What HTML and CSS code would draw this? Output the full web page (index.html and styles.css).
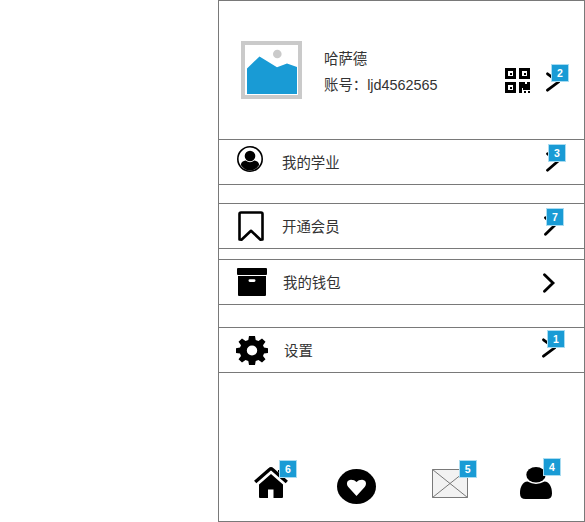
FILE: index.html
```html
<!DOCTYPE html>
<html lang="zh-CN">
<head>
<meta charset="utf-8">
<title>我的</title>
<link rel="stylesheet" href="styles.css">
</head>
<body>
<main class="phone">
  <header class="profile">
    <svg class="avatar" viewBox="0 0 61 58">
      <rect x="2" y="2" width="57" height="54" fill="#fff" stroke="#cacaca" stroke-width="4"/>
      <circle cx="36.3" cy="13" r="4.3" fill="#cacaca"/>
      <path d="M6 27.500 18.500 15.500 36 26.300 46 22.500 56 26V53H6z" fill="#199bd5"/>
    </svg>
    <div class="info">
      <div>哈萨德</div>
      <div>账号：ljd4562565</div>
    </div>
    <svg class="qr" viewBox="0 0 25 25" shape-rendering="crispEdges">
      <path fill-rule="evenodd" d="M0 0h11v11H0zM3 3v5h5V3zM14 0h11v11H14zM17 3v5h5V3zM0 14h11v11H0zM3 17v5h5v-5z"/>
      <path d="M5 5h2v2H5zM19 5h2v2h-2zM5 19h2v2H5zM14 14h6v2h2v-2h3v8h-7v-2h-1v5h-3zM19 23h2v2h-2zM23 23h2v2h-2z"/>
    </svg>
    <div class="go">
      <svg class="chevron" viewBox="0 0 14 20"><path d="M1.500 1.800 12.300 10 1.500 18.200"/></svg>
      <span class="badge">2</span>
    </div>
  </header>

  <section class="row study">
    <svg class="icon" viewBox="0 0 26 26">
      <circle cx="13" cy="13" r="12.200" fill="none" stroke="#000" stroke-width="1.600"/>
      <circle cx="13" cy="10" r="5.300"/>
      <path d="M3.800 19C4.200 16 6 14.800 8.700 14.500Q13 18 17.300 14.500C20 14.800 21.800 16 22.200 19Q18.500 24.500 13 24.500T3.800 19z"/>
    </svg>
    <span class="label">我的学业</span>
    <div class="go">
      <svg class="chevron" viewBox="0 0 14 20"><path d="M1.500 1.800 11 10 1.500 18.200"/></svg>
      <span class="badge">3</span>
    </div>
  </section>

  <section class="row member">
    <svg class="icon" viewBox="0 0 26 31">
      <path d="M3 1.500H23Q24.500 1.500 24.500 3V28.500L22.500 28.800 13 19.800 3.500 28.800 1.500 28.500V3Q1.500 1.500 3 1.500z" fill="none" stroke="#000" stroke-width="2.600" stroke-linejoin="round"/>
    </svg>
    <span class="label">开通会员</span>
    <div class="go">
      <svg class="chevron" viewBox="0 0 14 20"><path d="M1.500 1.800 10 10 1.500 18.200"/></svg>
      <span class="badge">7</span>
    </div>
  </section>

  <section class="row wallet">
    <svg class="icon" viewBox="0 0 30 28">
      <rect width="30" height="7" rx="1"/>
      <path fill-rule="evenodd" d="M1 8H29V27Q29 28 28 28H2Q1 28 1 27zM12.800 11.300a1.300 1.300 0 0 0 0 2.600h4.400a1.300 1.300 0 0 0 0-2.600z"/>
    </svg>
    <span class="label">我的钱包</span>
    <div class="go">
      <svg class="chevron" viewBox="0 0 14 20"><path d="M1.500 1.800 10 10 1.500 18.200"/></svg>
    </div>
  </section>

  <section class="row settings">
    <svg class="icon" viewBox="0 0 32 29" preserveAspectRatio="none">
      <path fill-rule="evenodd" d="M13 0H19L19.700 4 22.500 5.100 26 2.500 29.500 5.700 27 9.200 28 11.600 32 12.200V17L28 17.600 27 20 29.500 23.300 26 26.500 22.500 24 19.700 25.100 19 29H13L12.300 25.100 9.500 24 6 26.500 2.500 23.300 5 20 4 17.600 0 17V12.200L4 11.600 5 9.200 2.500 5.700 6 2.500 9.500 5.100 12.300 4zM16 9.500a5.200 5 0 1 0 0 10a5.200 5 0 1 0 0-10z"/>
    </svg>
    <span class="label">设置</span>
    <div class="go">
      <svg class="chevron" viewBox="0 0 14 20"><path d="M1.500 1.800 12.300 10 1.500 18.200"/></svg>
      <span class="badge">1</span>
    </div>
  </section>

  <nav class="tabs">
    <div class="tab home">
      <svg viewBox="0 0 34 31">
        <path d="M24 3H29V12L24 8z"/>
        <path d="M5 17.500 17 7 29 17.500V30Q29 31 28 31H19.500V22.500H14V31H6Q5 31 5 30z"/>
        <path d="M1.800 15.500 15.500 3.300Q17 2 18.500 3.300L32.200 15.500" fill="none" stroke="#fff" stroke-width="4.600"/>
        <path d="M1.200 15 15.500 2.500Q17 1.200 18.500 2.500L32.800 15" fill="none" stroke="#000" stroke-width="3.400"/>
      </svg>
      <span class="badge">6</span>
    </div>
    <div class="tab heart">
      <svg viewBox="0 0 39 35">
        <ellipse cx="19.500" cy="17.500" rx="19.500" ry="17.500"/>
        <path d="M19.500 27 11.300 18C8.500 14.500 10.500 10.800 14 10.800Q17.500 10.800 19.500 13 21.500 10.800 25 10.800C28.500 10.800 30.500 14.500 27.700 18z" fill="#fff"/>
      </svg>
    </div>
    <div class="tab mail">
      <svg viewBox="0 0 36 29">
        <rect x=".5" y=".5" width="35" height="28" fill="#f2f2f2"/>
        <path d="M.5.500H35.500V28.500H.5zL35.500 28.500M35.500.500.5 28.500" fill="none" stroke="#797979"/>
      </svg>
      <span class="badge">5</span>
    </div>
    <div class="tab user">
      <svg viewBox="0 0 32 32">
        <ellipse cx="16" cy="7.800" rx="9.700" ry="7.800"/>
        <path d="M7.500 14.600Q16 19.500 24.500 14.600C29.500 15 32 20 32 26.500Q32 32 26.500 32H5.500Q0 32 0 26.500C0 20 2.500 15 7.500 14.600z"/>
      </svg>
      <span class="badge">4</span>
    </div>
  </nav>
</main>
</body>
</html>
```
FILE: styles.css
```css
* { box-sizing: border-box; }

body {
  margin: 0;
  background: #fff;
  color: #333;
  font: 14.4px/26px "Liberation Sans", "Noto Sans CJK SC", sans-serif;
}

svg { display: block; }

.phone {
  width: 367px;
  height: 522px;
  margin-left: 218px;
  border: 1px solid #797979;
  display: flex;
  flex-direction: column;
}

.profile {
  height: 138px;
  display: flex;
  align-items: flex-start;
  padding: 40px 24px 0 22px;
}

.avatar { width: 61px; height: 58px; }

.info {
  flex: 1;
  margin: 5px 0 0 22px;
  white-space: nowrap;
}

.qr { width: 25px; height: 25px; margin: 27px 16px 0 0; }

.profile .go { margin-top: 31px; }
.profile .badge { top: -8px; }

.go {
  position: relative;
  width: 14px;
  height: 20px;
}

.chevron {
  width: 14px;
  height: 20px;
  fill: none;
  stroke: #000;
  stroke-width: 2.8;
  stroke-linecap: round;
}

.badge {
  position: absolute;
  left: 5px;
  top: -9px;
  width: 18px;
  height: 18px;
  border: 1px solid #a9dcf1;
  background: #199bd5;
  color: #fff;
  font: bold 10.5px/16px "Liberation Sans", sans-serif;
  text-align: center;
}

.row {
  height: 46px;
  margin: 0 -1px;
  border: 1px solid #797979;
  display: flex;
  align-items: flex-start;
}

.row .label { flex: 1; line-height: 20px; }

.study .icon { width: 26px; height: 26px; margin: 6px 19px 0 18px; }
.study .label { padding-top: 13px; }
.study .go { margin: 12px 24px 0 0; }
.study .badge { left: 2px; top: -8px; }

.member { margin-top: 18px; }
.member .icon { width: 26px; height: 31px; margin: 7px 18px 0 19px; }
.member .label { padding-top: 13px; }
.member .go { margin: 12px 26px 0 0; }
.member .badge { left: 2px; top: -8px; }

.wallet { margin-top: 10px; }
.wallet .icon { width: 30px; height: 28px; margin: 8px 16px 0 18px; }
.wallet .label { padding-top: 13px; }
.wallet .go { margin: 13px 27px 0 0; }

.settings { margin-top: 22px; }
.settings .icon { width: 32px; height: 29px; margin: 8px 16px 0 17px; }
.settings .label { padding-top: 13px; }
.settings .go { margin: 10px 28px 0 0; }
.settings .badge { left: 5px; top: -8px; }

.tabs {
  flex: 1;
  display: flex;
  align-items: flex-start;
  justify-content: space-between;
  padding: 94px 32px 0 35px;
}

.tab { position: relative; }

.home svg { width: 34px; height: 31px; }
.home .badge { left: 25px; top: -7px; }

.heart { margin: 2px 0 0 -6px; }
.heart svg { width: 39px; height: 35px; }

.mail { margin: 2px -3px 0 0; }
.mail svg { width: 36px; height: 29px; }
.mail .badge { left: 27px; }

.user svg { width: 32px; height: 32px; }
.user .badge { left: 23px; }
```
